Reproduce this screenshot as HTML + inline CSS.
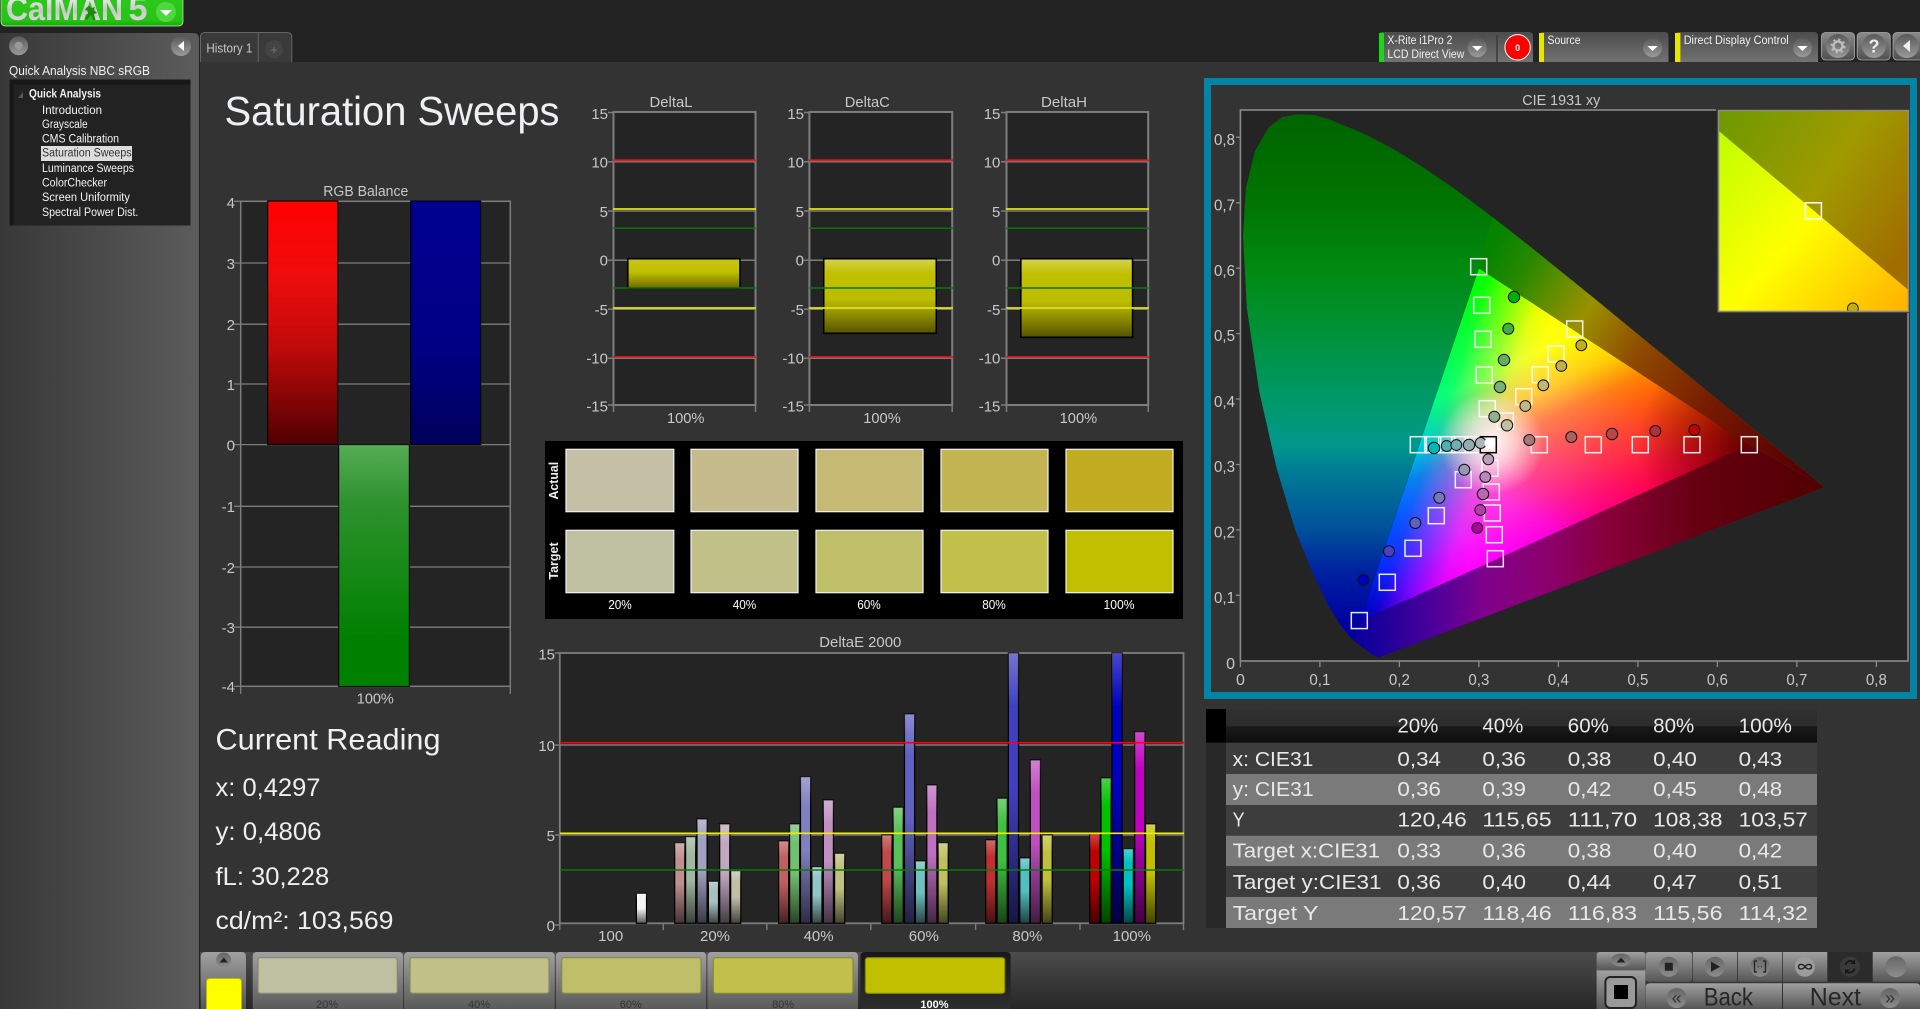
<!DOCTYPE html>
<html lang="en"><head><meta charset="utf-8"><title>CalMAN 5 - Saturation Sweeps</title>
<style>
html,body{margin:0;padding:0;background:#222;width:1920px;height:1009px;overflow:hidden}
svg{display:block}
text{font-family:"Liberation Sans",sans-serif;fill:#c8c8c8}
.w{fill:#f0f0f0}.k{fill:#262626}
.m{text-anchor:middle}.e{text-anchor:end}
.a{font-size:15px}
.c{font-size:16px}
.tb{font-size:20px;fill:#e8e8e8}
.tr{font-size:11.5px;fill:#f4f4f4}
.r{font-size:25px;fill:#eee}
</style></head><body>
<svg width="1920" height="1009" viewBox="0 0 1920 1009" xmlns="http://www.w3.org/2000/svg">
<defs>
<linearGradient id="lp" x1="0" x2="1" y1="0" y2="0"><stop offset="0" stop-color="#383838"/><stop offset="1" stop-color="#5c5c5c"/></linearGradient>
<linearGradient id="logo" x1="0" x2="0" y1="0" y2="1"><stop offset="0" stop-color="#2ec81c"/><stop offset=".8" stop-color="#24c414"/><stop offset="1" stop-color="#18a80c"/></linearGradient>
<linearGradient id="lt" x1="0" x2="0" y1="0" y2="1"><stop offset="0" stop-color="#fff"/><stop offset=".55" stop-color="#c8c8c8"/><stop offset="1" stop-color="#e0e0e0"/></linearGradient>
<linearGradient id="dd" x1="0" x2="0" y1="0" y2="1"><stop offset="0" stop-color="#4c4c4c"/><stop offset="1" stop-color="#727272"/></linearGradient>
<linearGradient id="btn" x1="0" x2="0" y1="0" y2="1"><stop offset="0" stop-color="#8a8a8a"/><stop offset="1" stop-color="#505050"/></linearGradient>
<linearGradient id="btn2" x1="0" x2="0" y1="0" y2="1"><stop offset="0" stop-color="#a0a0a0"/><stop offset="1" stop-color="#565656"/></linearGradient>
<linearGradient id="circ" x1="0" x2="0" y1="0" y2="1"><stop offset="0" stop-color="#5a5a5a"/><stop offset="1" stop-color="#9a9a9a"/></linearGradient>
<linearGradient id="circ2" x1="0" x2="0" y1="0" y2="1"><stop offset="0" stop-color="#666"/><stop offset="1" stop-color="#8c8c8c"/></linearGradient>
<linearGradient id="strip" x1="0" x2="0" y1="0" y2="1"><stop offset="0" stop-color="#4c4c4c"/><stop offset="1" stop-color="#262626"/></linearGradient>
<linearGradient id="act" x1="0" x2="0" y1="0" y2="1"><stop offset="0" stop-color="#181818"/><stop offset="1" stop-color="#2e2e2e"/></linearGradient>
<linearGradient id="hd" x1="0" x2="0" y1="0" y2="1"><stop offset="0" stop-color="#303030"/><stop offset=".5" stop-color="#2c2c2c"/><stop offset=".52" stop-color="#1a1a1a"/><stop offset="1" stop-color="#0c0c0c"/></linearGradient>
<linearGradient id="barr" x1="0" x2="0" y1="0" y2="1"><stop offset="0" stop-color="#f00"/><stop offset=".3" stop-color="#f00c0c"/><stop offset=".6" stop-color="#c00a0a"/><stop offset="1" stop-color="#500000"/></linearGradient>
<linearGradient id="barb" x1="0" x2="0" y1="0" y2="1"><stop offset="0" stop-color="#000090"/><stop offset=".6" stop-color="#000084"/><stop offset="1" stop-color="#00005a"/></linearGradient>
<linearGradient id="barg" x1="0" x2="0" y1="0" y2="1"><stop offset="0" stop-color="#56ac56"/><stop offset=".25" stop-color="#2c922c"/><stop offset=".8" stop-color="#008000"/><stop offset="1" stop-color="#008000"/></linearGradient>
<linearGradient id="y1" x1="0" x2="0" y1="0" y2="1"><stop offset="0" stop-color="#c8c618"/><stop offset=".45" stop-color="#c0c000"/><stop offset="1" stop-color="#6e6a00"/></linearGradient>
<linearGradient id="y2" x1="0" x2="0" y1="0" y2="1"><stop offset="0" stop-color="#d6d24e"/><stop offset=".2" stop-color="#c0c000"/><stop offset=".55" stop-color="#bcbc00"/><stop offset="1" stop-color="#565200"/></linearGradient>
<linearGradient id="ov" x1="0" x2="0" y1="0" y2="1"><stop offset="0" stop-color="#fff" stop-opacity=".28"/><stop offset=".2" stop-color="#fff" stop-opacity="0"/><stop offset=".5" stop-color="#000" stop-opacity="0"/><stop offset="1" stop-color="#000" stop-opacity=".65"/></linearGradient>
<clipPath id="loc"><path id="locus" d="M1378.8 657.5L1371.1 653.7 1364.9 649.2 1354.9 641.4 1348.1 634.7 1339.1 623 1327.5 604 1313 574 1295 529.5 1276.5 467.8 1259.1 390.7 1246.9 308.5 1243 235.7 1246 187.5 1255 151 1269 127 1282.6 117 1296.4 114.4 1314.8 115 1331.2 120.1 1363.4 133.4 1393.8 149.3 1422.9 167.2 1451.7 186.8 1480.2 207.8 1508.6 229.6 1537 252.1 1565.3 275 1593.5 297.8 1621 320.4 1647.8 342.4 1673.5 363.4 1697.7 383.2 1719.7 401.3 1738.9 417 1769.7 442.2 1790.2 459 1803.2 469.7 1812 477 1824.5 487.2Z"/></clipPath>
<clipPath id="tri"><polygon points="1749.2,444.8 1478.9,268.2 1359.65,621.5"/></clipPath>
<clipPath id="ins"><rect x="1719" y="111" width="189" height="200"/></clipPath>
<linearGradient id="ol" gradientUnits="userSpaceOnUse" x1="0" y1="115" x2="0" y2="660"><stop offset="0" stop-color="#006400"/><stop offset=".156" stop-color="#007400"/><stop offset=".28" stop-color="#008a10"/><stop offset=".4" stop-color="#009238"/><stop offset=".52" stop-color="#009868"/><stop offset=".605" stop-color="#00988c"/><stop offset=".65" stop-color="#007e94"/><stop offset=".76" stop-color="#00509a"/><stop offset=".84" stop-color="#0020a0"/><stop offset=".94" stop-color="#0000a0"/><stop offset="1" stop-color="#0000a0"/></linearGradient>
<linearGradient id="ow" gradientUnits="userSpaceOnUse" x1="1479" y1="268" x2="1824" y2="487"><stop offset="0" stop-color="#068400"/><stop offset=".1" stop-color="#2a8800"/><stop offset=".18" stop-color="#5e8e00"/><stop offset=".28" stop-color="#9a9000"/><stop offset=".44" stop-color="#8f4a00"/><stop offset=".66" stop-color="#761a00"/><stop offset=".85" stop-color="#600600"/><stop offset="1" stop-color="#500000"/></linearGradient>
<linearGradient id="ob" gradientUnits="userSpaceOnUse" x1="1340" y1="0" x2="1824" y2="0"><stop offset="0" stop-color="#0000a0"/><stop offset=".08" stop-color="#1a009a"/><stop offset=".2" stop-color="#50009a"/><stop offset=".3" stop-color="#80008c"/><stop offset=".42" stop-color="#8c0070"/><stop offset=".56" stop-color="#880038"/><stop offset=".75" stop-color="#640010"/><stop offset="1" stop-color="#500000"/></linearGradient>
<linearGradient id="chR" gradientUnits="userSpaceOnUse" x1="1426.2" y1="424.3" x2="1507.8" y2="451.9"><stop offset="0" stop-color="#000"/><stop offset=".154" stop-color="#140000"/><stop offset=".308" stop-color="#4d0000"/><stop offset=".46" stop-color="#800000"/><stop offset=".615" stop-color="#b30000"/><stop offset=".77" stop-color="#e60000"/><stop offset="1" stop-color="#f00"/></linearGradient>
<linearGradient id="chG" gradientUnits="userSpaceOnUse" x1="1533.1" y1="542.8" x2="1462.5" y2="387.1"><stop offset="0" stop-color="#000"/><stop offset=".125" stop-color="#001400"/><stop offset=".25" stop-color="#002e00"/><stop offset=".375" stop-color="#004700"/><stop offset=".5" stop-color="#006100"/><stop offset=".625" stop-color="#008000"/><stop offset=".79" stop-color="#00cc00"/><stop offset="1" stop-color="#0f0"/></linearGradient>
<linearGradient id="chB" gradientUnits="userSpaceOnUse" x1="1567.2" y1="325.9" x2="1437.4" y2="524.4"><stop offset="0" stop-color="#000"/><stop offset=".12" stop-color="#000014"/><stop offset=".24" stop-color="#000033"/><stop offset=".36" stop-color="#00004d"/><stop offset=".48" stop-color="#00006b"/><stop offset=".6" stop-color="#00008c"/><stop offset=".76" stop-color="#0000d9"/><stop offset="1" stop-color="#00f"/></linearGradient>
<radialGradient id="dR" gradientUnits="userSpaceOnUse" cx="1749.2" cy="444.8" r="112"><stop offset="0" stop-color="#000" stop-opacity=".62"/><stop offset=".5" stop-color="#000" stop-opacity=".3"/><stop offset="1" stop-color="#000" stop-opacity="0"/></radialGradient>
<radialGradient id="dB" gradientUnits="userSpaceOnUse" cx="1359.65" cy="621.5" r="60"><stop offset="0" stop-color="#000" stop-opacity=".3"/><stop offset="1" stop-color="#000" stop-opacity="0"/></radialGradient>
<radialGradient id="wG" gradientUnits="userSpaceOnUse" cx="1492" cy="443" r="52"><stop offset="0" stop-color="#fff" stop-opacity=".95"/><stop offset=".45" stop-color="#fff" stop-opacity=".6"/><stop offset="1" stop-color="#fff" stop-opacity="0"/></radialGradient>
<linearGradient id="i1" gradientUnits="userSpaceOnUse" x1="1719" y1="111" x2="1909" y2="240"><stop offset="0" stop-color="#6c9a00"/><stop offset=".55" stop-color="#a09a00"/><stop offset="1" stop-color="#a06e00"/></linearGradient>
<linearGradient id="i2" gradientUnits="userSpaceOnUse" x1="1719" y1="131" x2="1909" y2="300"><stop offset="0" stop-color="#bfff00"/><stop offset=".5" stop-color="#ffff00"/><stop offset="1" stop-color="#ffb400"/></linearGradient>
</defs>

<!-- page -->
<rect width="1920" height="1009" fill="#222"/>
<rect x="200" y="62" width="1720" height="890" fill="#333"/>

<!-- logo -->
<path d="M1 -2H183V21Q183 26 178 26H6Q1 26 1 21Z" fill="url(#logo)" stroke="#c8f0c0" stroke-width=".7"/>
<text x="6" y="20" font-size="33" font-weight="bold" style="fill:url(#lt)" textLength="117" lengthAdjust="spacingAndGlyphs">CalMAN</text>
<text x="128.5" y="20" font-size="33" font-weight="bold" style="fill:url(#lt)" textLength="19" lengthAdjust="spacingAndGlyphs">5</text>
<path d="M86 8l3-2 3 2 3-1-1 3 3 3-3 1 1 6-2 0-2-5-4 5-2-1 3-6-1-3-2 1z" fill="#1d8a12"/>
<circle cx="166" cy="12" r="10" fill="#4ed840"/>
<path d="M160 10h12l-6 6z" fill="#fff"/>

<!-- left panel -->
<path d="M0 33H193Q199 33 199 39V1009H0Z" fill="url(#lp)"/>
<circle cx="18.6" cy="45.7" r="9.5" fill="url(#circ)"/><circle cx="18.6" cy="45.7" r="4" fill="#999"/>
<circle cx="181" cy="46" r="10" fill="url(#circ)"/><path d="M184 41v10l-6-5z" fill="#fff"/>
<text x="9" y="75" font-size="13" class="w" textLength="141" lengthAdjust="spacingAndGlyphs">Quick Analysis NBC sRGB</text>
<rect x="9.5" y="79.5" width="181" height="146" fill="#222"/>
<rect x="9.5" y="79.5" width="181" height="5" fill="#181818"/>
<rect x="9.5" y="79.5" width="4" height="146" fill="#181818"/>
<path d="M23 92v6h-5z" fill="#555"/>
<text x="29" y="97.7" font-size="11.5" font-weight="bold" class="w" textLength="72" lengthAdjust="spacingAndGlyphs">Quick Analysis</text>
<rect x="41" y="146" width="91" height="15" fill="#ddd"/>
<text x="42" y="114" class="tr" textLength="60" lengthAdjust="spacingAndGlyphs">Introduction</text>
<text x="42" y="128" class="tr" textLength="45.7" lengthAdjust="spacingAndGlyphs">Grayscale</text>
<text x="42" y="142.7" class="tr" textLength="77" lengthAdjust="spacingAndGlyphs">CMS Calibration</text>
<text x="42" y="156.7" font-size="11.5" style="fill:#333" textLength="89.6" lengthAdjust="spacingAndGlyphs">Saturation Sweeps</text>
<text x="42" y="172" class="tr" textLength="92" lengthAdjust="spacingAndGlyphs">Luminance Sweeps</text>
<text x="42" y="186.7" class="tr" textLength="65" lengthAdjust="spacingAndGlyphs">ColorChecker</text>
<text x="42" y="201" class="tr" textLength="87.9" lengthAdjust="spacingAndGlyphs">Screen Uniformity</text>
<text x="42" y="216" class="tr" textLength="96.4" lengthAdjust="spacingAndGlyphs">Spectral Power Dist.</text>

<!-- tabs -->
<path d="M200.5 62V37Q200.5 32.5 205 32.5H287Q291.8 32.5 291.8 37V62" fill="#3a3a3a" stroke="#666"/>
<line x1="258.2" y1="33" x2="258.2" y2="62" stroke="#666"/>
<text x="206.4" y="52.3" font-size="13" textLength="46" lengthAdjust="spacingAndGlyphs">History 1</text>
<circle cx="274" cy="49.3" r="9" fill="#444"/><text x="274" y="54" font-size="12" class="m" style="fill:#777">+</text>

<!-- top right toolbar -->
<path d="M1379 62V35Q1379 32 1382 32H1529Q1533 32 1533 36V62Z" fill="url(#dd)"/>
<rect x="1379" y="33" width="5" height="29" fill="#18d818"/>
<text x="1387.4" y="44" font-size="11.5" class="w" textLength="65" lengthAdjust="spacingAndGlyphs">X-Rite i1Pro 2</text>
<text x="1387.4" y="58" font-size="11.5" class="w" textLength="77" lengthAdjust="spacingAndGlyphs">LCD Direct View</text>
<circle cx="1477.3" cy="47.7" r="9.5" fill="url(#circ)"/><path d="M1472 46h10.5l-5.2 5z" fill="#fff"/>
<line x1="1497" y1="35" x2="1497" y2="62" stroke="#3a3a3a" stroke-width="1.5"/>
<circle cx="1517.6" cy="47.3" r="12.7" fill="#f00" stroke="#fff" stroke-width="1"/>
<text x="1517.6" y="51" font-size="9" font-weight="bold" class="m" style="fill:#fff">0</text>

<path d="M1539 62V35Q1539 32 1542 32H1665Q1668.5 32 1668.5 36V62Z" fill="url(#dd)"/>
<rect x="1539" y="33" width="5" height="29" fill="#e6e600"/>
<text x="1547.5" y="44" font-size="11.5" class="w" textLength="33" lengthAdjust="spacingAndGlyphs">Source</text>
<circle cx="1652.6" cy="47.7" r="9.5" fill="url(#circ)"/><path d="M1647.3 46h10.5l-5.2 5z" fill="#fff"/>

<path d="M1675 62V35Q1675 32 1678 32H1814Q1818 32 1818 36V62Z" fill="url(#dd)"/>
<rect x="1675" y="33" width="5.4" height="29" fill="#e6e600"/>
<text x="1683.7" y="44" font-size="11.5" class="w" textLength="105" lengthAdjust="spacingAndGlyphs">Direct Display Control</text>
<circle cx="1802.5" cy="47.7" r="9.5" fill="url(#circ)"/><path d="M1797.2 46h10.5l-5.2 5z" fill="#fff"/>

<rect x="1821.5" y="32.5" width="33" height="27.5" rx="4" fill="url(#btn)" stroke="#aaa" stroke-width=".8"/>
<circle cx="1838" cy="46" r="12" fill="url(#circ)"/>
<circle cx="1838" cy="46" r="4.5" fill="none" stroke="#bdbdbd" stroke-width="2.4"/>
<circle cx="1838" cy="46" r="6.5" fill="none" stroke="#bdbdbd" stroke-width="2" stroke-dasharray="2.2 2.9"/>
<rect x="1857.2" y="32.5" width="33" height="27.5" rx="4" fill="url(#btn)" stroke="#aaa" stroke-width=".8"/>
<circle cx="1874" cy="46" r="12" fill="url(#circ)"/>
<text x="1874" y="52.5" font-size="18" font-weight="bold" class="m" style="fill:#eee">?</text>
<rect x="1893" y="32.5" width="33" height="27.5" rx="4" fill="url(#btn)" stroke="#aaa" stroke-width=".8"/>
<circle cx="1906.8" cy="46" r="12" fill="url(#circ)"/><path d="M1910 40v12l-7-6z" fill="#eee"/>

<!-- heading -->
<text x="224.5" y="125" font-size="41" style="fill:#eef0f2" textLength="335" lengthAdjust="spacingAndGlyphs">Saturation Sweeps</text>

<!-- RGB balance -->
<text x="365.8" y="196" font-size="15" class="m" textLength="85" lengthAdjust="spacingAndGlyphs">RGB Balance</text>
<rect x="240.7" y="201.3" width="269.6" height="485" fill="#242424" stroke="#7d7d7d" stroke-width="1.5"/>
<g stroke="#7d7d7d" stroke-width="1.3"><path d="M234 201.3H240M234 263H510M234 324.2H510M234 384H510M234 444.6H510M234 506.3H510M234 567H510M234 627.2H510M234 686.4H240M240.7 686V694M510.3 686V694"/></g>
<rect x="267.7" y="201" width="70" height="243.6" fill="url(#barr)" stroke="#000"/>
<rect x="410.7" y="201" width="70" height="243.6" fill="url(#barb)" stroke="#000"/>
<rect x="338.7" y="444.6" width="70.6" height="241.8" fill="url(#barg)" stroke="#000"/>
<text x="235" y="208" class="a e">4</text><text x="235" y="269" class="a e">3</text><text x="235" y="330" class="a e">2</text><text x="235" y="390" class="a e">1</text><text x="235" y="450.5" class="a e">0</text><text x="235" y="512" class="a e">-1</text><text x="235" y="573" class="a e">-2</text><text x="235" y="633" class="a e">-3</text><text x="235" y="692" class="a e">-4</text>
<text x="375.3" y="703.5" class="a m" textLength="37" lengthAdjust="spacingAndGlyphs">100%</text>

<!-- Current reading -->
<text x="215.5" y="749.6" font-size="30" class="w" textLength="225" lengthAdjust="spacingAndGlyphs">Current Reading</text>
<text x="215.5" y="796" class="r" textLength="105" lengthAdjust="spacingAndGlyphs">x: 0,4297</text>
<text x="215.5" y="840" class="r" textLength="106" lengthAdjust="spacingAndGlyphs">y: 0,4806</text>
<text x="215.5" y="885" class="r" textLength="113.7" lengthAdjust="spacingAndGlyphs">fL: 30,228</text>
<text x="215.5" y="929" class="r" textLength="178" lengthAdjust="spacingAndGlyphs">cd/m²: 103,569</text>

<!-- Delta charts -->
<text x="671" y="107" class="a m" textLength="43" lengthAdjust="spacingAndGlyphs">DeltaL</text>
<rect x="613.5" y="112" width="142" height="293" fill="#242424" stroke="#7d7d7d" stroke-width="2"/>
<path d="M608 112.5h5M608 161.7H755M608 211H755M608 260.3H755M608 309.3H755M608 358.3H755M608 405h5M613.5 405v7M755.5 405v7" stroke="#7d7d7d" stroke-width="1.5" fill="none"/>
<rect x="627.8" y="258.7" width="112.2" height="29.5" fill="url(#y1)" stroke="#000" stroke-width="1.6"/>

<text x="867.3" y="107" class="a m" textLength="45" lengthAdjust="spacingAndGlyphs">DeltaC</text>
<rect x="809.4" y="112" width="142.8" height="293" fill="#242424" stroke="#7d7d7d" stroke-width="2"/>
<path d="M804 112.5h5M804 161.7H952M804 211H952M804 260.3H952M804 309.3H952M804 358.3H952M804 405h5M809.4 405v7M952.2 405v7" stroke="#7d7d7d" stroke-width="1.5" fill="none"/>
<rect x="823.7" y="258.7" width="112.6" height="74.6" fill="url(#y2)" stroke="#000" stroke-width="1.6"/>

<text x="1064" y="107" class="a m" textLength="46" lengthAdjust="spacingAndGlyphs">DeltaH</text>
<rect x="1006.5" y="112" width="141.7" height="293" fill="#242424" stroke="#7d7d7d" stroke-width="2"/>
<path d="M1001 112.5h5M1001 161.7H1148M1001 211H1148M1001 260.3H1148M1001 309.3H1148M1001 358.3H1148M1001 405h5M1006.5 405v7M1148.2 405v7" stroke="#7d7d7d" stroke-width="1.5" fill="none"/>
<rect x="1020.8" y="258.7" width="111.8" height="78.6" fill="url(#y2)" stroke="#000" stroke-width="1.6"/>

<g fill="none" stroke-width="1.8">
<path d="M613 160.3H756M809 160.3H953M1006 160.3H1149M613 357H756M809 357H953M1006 357H1149" stroke="#e01c1c"/>
<path d="M613 209H756M809 209H953M1006 209H1149M613 308H756M809 308H953M1006 308H1149" stroke="#e4e40c"/>
<path d="M613 228.3H756M809 228.3H953M1006 228.3H1149M613 288H756M809 288H953M1006 288H1149" stroke="#0a760a" stroke-width="1.5"/>
</g>
<text x="608" y="118.8" class="a e">15</text><text x="608" y="167.5" class="a e">10</text><text x="608" y="216.8" class="a e">5</text><text x="608" y="265.5" class="a e">0</text><text x="608" y="314.8" class="a e">-5</text><text x="608" y="363.5" class="a e">-10</text><text x="608" y="411.6" class="a e">-15</text>
<text x="804" y="118.8" class="a e">15</text><text x="804" y="167.5" class="a e">10</text><text x="804" y="216.8" class="a e">5</text><text x="804" y="265.5" class="a e">0</text><text x="804" y="314.8" class="a e">-5</text><text x="804" y="363.5" class="a e">-10</text><text x="804" y="411.6" class="a e">-15</text>
<text x="1000.4" y="118.8" class="a e">15</text><text x="1000.4" y="167.5" class="a e">10</text><text x="1000.4" y="216.8" class="a e">5</text><text x="1000.4" y="265.5" class="a e">0</text><text x="1000.4" y="314.8" class="a e">-5</text><text x="1000.4" y="363.5" class="a e">-10</text><text x="1000.4" y="411.6" class="a e">-15</text>
<text x="685.7" y="423" class="a m" textLength="37.5" lengthAdjust="spacingAndGlyphs">100%</text>
<text x="882" y="423" class="a m" textLength="37.5" lengthAdjust="spacingAndGlyphs">100%</text>
<text x="1078.4" y="423" class="a m" textLength="37.5" lengthAdjust="spacingAndGlyphs">100%</text>

<!-- Swatches -->
<rect x="545" y="441" width="638" height="178" fill="#000"/>
<g stroke="#f2f2f2" stroke-width="1.2">
<rect x="566" y="449.3" width="107.8" height="62.4" fill="#c5bfa6"/><rect x="691" y="449.3" width="107" height="62.4" fill="#c5bb8d"/><rect x="816" y="449.3" width="107" height="62.4" fill="#c5b974"/><rect x="941" y="449.3" width="107" height="62.4" fill="#c4b553"/><rect x="1066" y="449.3" width="107" height="62.4" fill="#c2ad22"/>
<rect x="566" y="530.3" width="107.8" height="62.4" fill="#bfbfa2"/><rect x="691" y="530.3" width="107" height="62.4" fill="#c0c088"/><rect x="816" y="530.3" width="107" height="62.4" fill="#bfbf6a"/><rect x="941" y="530.3" width="107" height="62.4" fill="#c0c04a"/><rect x="1066" y="530.3" width="107" height="62.4" fill="#c0c000"/>
</g>
<text transform="translate(558 480.7) rotate(-90)" font-size="13" font-weight="bold" class="m" style="fill:#eee" textLength="37.7" lengthAdjust="spacingAndGlyphs">Actual</text>
<text transform="translate(558 561) rotate(-90)" font-size="13" font-weight="bold" class="m" style="fill:#eee" textLength="37.3" lengthAdjust="spacingAndGlyphs">Target</text>
<text x="620" y="609" font-size="13" class="m" style="fill:#fff" textLength="23.6" lengthAdjust="spacingAndGlyphs">20%</text>
<text x="744.5" y="609" font-size="13" class="m" style="fill:#fff" textLength="23.6" lengthAdjust="spacingAndGlyphs">40%</text>
<text x="869" y="609" font-size="13" class="m" style="fill:#fff" textLength="23.6" lengthAdjust="spacingAndGlyphs">60%</text>
<text x="994" y="609" font-size="13" class="m" style="fill:#fff" textLength="23.6" lengthAdjust="spacingAndGlyphs">80%</text>
<text x="1119" y="609" font-size="13" class="m" style="fill:#fff" textLength="31" lengthAdjust="spacingAndGlyphs">100%</text>

<!-- DeltaE 2000 -->
<text x="860.3" y="647" class="a m" textLength="82" lengthAdjust="spacingAndGlyphs">DeltaE 2000</text>
<rect x="559.8" y="653" width="623.7" height="270.3" fill="#242424" stroke="#7d7d7d" stroke-width="1.8"/>
<path d="M555 653h5M555 745H1183M555 835H1183M555 925h5M559.8 923v7M663.3 923v7M766.9 923v7M870.8 923v7M975.6 923v7M1080 923v7M1183.5 923v7" stroke="#7d7d7d" stroke-width="1.4" fill="none"/>
<g stroke="#000" stroke-width="1.2">
<rect x="636.4" y="893.3" width="10.1" height="30" fill="#f4f4f4"/>
<rect x="674.7" y="842.7" width="10.1" height="80.6" fill="#c09090"/><rect x="685.6" y="836.7" width="10.1" height="86.6" fill="#a0b8a0"/><rect x="697" y="819" width="10.1" height="104.3" fill="#a0a0c0"/><rect x="708.4" y="881.3" width="10.1" height="42" fill="#a8c0c0"/><rect x="719.7" y="824" width="10.1" height="99.3" fill="#c0a8c0"/><rect x="730.7" y="870.7" width="10.1" height="52.6" fill="#c0c0a8"/>
<rect x="778.6" y="841" width="10.1" height="82.3" fill="#c06060"/><rect x="789.6" y="824" width="10.1" height="99.3" fill="#70c070"/><rect x="800.5" y="776.7" width="10.1" height="146.6" fill="#8080c0"/><rect x="811.9" y="866.7" width="10.1" height="56.6" fill="#90c8c8"/><rect x="823.3" y="800" width="10.1" height="123.3" fill="#c090c0"/><rect x="834.6" y="853.3" width="10.1" height="70" fill="#c0c080"/>
<rect x="881.8" y="835" width="10.1" height="88.3" fill="#c04848"/><rect x="893.1" y="807.3" width="10.1" height="116" fill="#58c058"/><rect x="904.5" y="714" width="10.1" height="209.3" fill="#6060c0"/><rect x="915.4" y="861" width="10.1" height="62.3" fill="#70c0c0"/><rect x="926.8" y="785" width="10.1" height="138.3" fill="#c070c0"/><rect x="938.1" y="842.7" width="10.1" height="80.6" fill="#c0c060"/>
<rect x="985.7" y="840" width="10.1" height="83.3" fill="#c03030"/><rect x="997.1" y="798.3" width="10.1" height="125" fill="#40c040"/><rect x="1008.4" y="653" width="10.1" height="270.3" fill="#4040c0"/><rect x="1019.8" y="858" width="10.1" height="65.3" fill="#50c0c0"/><rect x="1030.3" y="760" width="10.1" height="163.3" fill="#c050c0"/><rect x="1042.1" y="835" width="10.1" height="88.3" fill="#c0c040"/>
<rect x="1089.7" y="833.3" width="10.1" height="90" fill="#c00000"/><rect x="1101" y="778" width="10.1" height="145.3" fill="#00c000"/><rect x="1112" y="653" width="10.1" height="270.3" fill="#0000c0"/><rect x="1123.3" y="848.7" width="10.1" height="74.6" fill="#00c0c0"/><rect x="1134.7" y="731.7" width="10.1" height="191.6" fill="#c000c0"/><rect x="1145.6" y="824" width="10.1" height="99.3" fill="#c0c000"/>
</g>
<g>
<rect x="636.4" y="893.3" width="10.1" height="30" fill="url(#ov)"/>
<rect x="674.7" y="842.7" width="10.1" height="80.6" fill="url(#ov)"/><rect x="685.6" y="836.7" width="10.1" height="86.6" fill="url(#ov)"/><rect x="697" y="819" width="10.1" height="104.3" fill="url(#ov)"/><rect x="708.4" y="881.3" width="10.1" height="42" fill="url(#ov)"/><rect x="719.7" y="824" width="10.1" height="99.3" fill="url(#ov)"/><rect x="730.7" y="870.7" width="10.1" height="52.6" fill="url(#ov)"/>
<rect x="778.6" y="841" width="10.1" height="82.3" fill="url(#ov)"/><rect x="789.6" y="824" width="10.1" height="99.3" fill="url(#ov)"/><rect x="800.5" y="776.7" width="10.1" height="146.6" fill="url(#ov)"/><rect x="811.9" y="866.7" width="10.1" height="56.6" fill="url(#ov)"/><rect x="823.3" y="800" width="10.1" height="123.3" fill="url(#ov)"/><rect x="834.6" y="853.3" width="10.1" height="70" fill="url(#ov)"/>
<rect x="881.8" y="835" width="10.1" height="88.3" fill="url(#ov)"/><rect x="893.1" y="807.3" width="10.1" height="116" fill="url(#ov)"/><rect x="904.5" y="714" width="10.1" height="209.3" fill="url(#ov)"/><rect x="915.4" y="861" width="10.1" height="62.3" fill="url(#ov)"/><rect x="926.8" y="785" width="10.1" height="138.3" fill="url(#ov)"/><rect x="938.1" y="842.7" width="10.1" height="80.6" fill="url(#ov)"/>
<rect x="985.7" y="840" width="10.1" height="83.3" fill="url(#ov)"/><rect x="997.1" y="798.3" width="10.1" height="125" fill="url(#ov)"/><rect x="1008.4" y="653" width="10.1" height="270.3" fill="url(#ov)"/><rect x="1019.8" y="858" width="10.1" height="65.3" fill="url(#ov)"/><rect x="1030.3" y="760" width="10.1" height="163.3" fill="url(#ov)"/><rect x="1042.1" y="835" width="10.1" height="88.3" fill="url(#ov)"/>
<rect x="1089.7" y="833.3" width="10.1" height="90" fill="url(#ov)"/><rect x="1101" y="778" width="10.1" height="145.3" fill="url(#ov)"/><rect x="1112" y="653" width="10.1" height="270.3" fill="url(#ov)"/><rect x="1123.3" y="848.7" width="10.1" height="74.6" fill="url(#ov)"/><rect x="1134.7" y="731.7" width="10.1" height="191.6" fill="url(#ov)"/><rect x="1145.6" y="824" width="10.1" height="99.3" fill="url(#ov)"/>
</g>
<path d="M560 742.7H1184" stroke="#f00" stroke-width="1.6"/>
<path d="M560 833.3H1184" stroke="#f0f000" stroke-width="1.6"/>
<path d="M560 870H1184" stroke="#0a7a0a" stroke-width="1.5"/>
<text x="555" y="659.5" class="a e">15</text><text x="555" y="751" class="a e">10</text><text x="555" y="841" class="a e">5</text><text x="555" y="931" class="a e">0</text>
<text x="610.7" y="941" class="a m">100</text><text x="715" y="941" class="a m">20%</text><text x="818.6" y="941" class="a m">40%</text><text x="923.8" y="941" class="a m">60%</text><text x="1027.4" y="941" class="a m">80%</text><text x="1131.8" y="941" class="a m">100%</text>

<!-- CIE panel -->
<rect x="1207.5" y="81.5" width="706" height="614" fill="#333" stroke="#0085a6" stroke-width="7"/>
<text x="1561.3" y="105" class="a m" textLength="78" lengthAdjust="spacingAndGlyphs">CIE 1931 xy</text>
<rect x="1240.4" y="110" width="667.6" height="551" fill="#242424" stroke="#8a8a8a" stroke-width="1.6"/>
<g clip-path="url(#loc)">
<rect x="1240" y="110" width="600" height="560" fill="url(#ol)"/>
<polygon points="1478.9,268.2 1749.2,444.8 1830,490 1830,400 1500,190 1494,212" fill="url(#ow)"/>
<polygon points="1359.65,621.5 1749.2,444.8 1830,490 1830,670 1345,670" fill="url(#ob)"/>
</g>
<g style="isolation:isolate">
<polygon points="1749.2,444.8 1478.9,268.2 1359.65,621.5" fill="#000"/>
<polygon points="1749.2,444.8 1478.9,268.2 1359.65,621.5" fill="url(#chR)" style="mix-blend-mode:screen"/>
<polygon points="1749.2,444.8 1478.9,268.2 1359.65,621.5" fill="url(#chG)" style="mix-blend-mode:screen"/>
<polygon points="1749.2,444.8 1478.9,268.2 1359.65,621.5" fill="url(#chB)" style="mix-blend-mode:screen"/>
</g>
<g clip-path="url(#tri)"><circle cx="1749.2" cy="444.8" r="112" fill="url(#dR)"/><circle cx="1359.65" cy="621.5" r="60" fill="url(#dB)"/><circle cx="1492" cy="443" r="52" fill="url(#wG)"/></g>
<!-- target squares -->
<g fill="none" stroke="#fff" stroke-width="1.5" stroke-opacity=".9">
<rect x="1351.3" y="612.6" width="16" height="16"/><rect x="1379.3" y="574.3" width="16" height="16"/><rect x="1405" y="540.3" width="16" height="16"/><rect x="1428.3" y="507.7" width="16" height="16"/><rect x="1455.3" y="471.7" width="16" height="16"/>
<rect x="1470.7" y="258.7" width="16" height="16"/><rect x="1473.7" y="297.3" width="16" height="16"/><rect x="1475" y="331.3" width="16" height="16"/><rect x="1476.3" y="367" width="16" height="16"/><rect x="1479.3" y="400.7" width="16" height="16"/>
<rect x="1566.7" y="321" width="16" height="16"/><rect x="1548" y="346" width="16" height="16"/><rect x="1532.3" y="366.7" width="16" height="16"/><rect x="1515.7" y="388.7" width="16" height="16"/><rect x="1497.3" y="413" width="16" height="16"/>
<rect x="1741.3" y="436.7" width="16" height="16"/><rect x="1684" y="436.7" width="16" height="16"/><rect x="1632.3" y="436.7" width="16" height="16"/><rect x="1585.3" y="436.7" width="16" height="16"/><rect x="1531.3" y="436.7" width="16" height="16"/>
<rect x="1410.3" y="436.7" width="16" height="16"/><rect x="1424.7" y="436.7" width="16" height="16"/><rect x="1438.7" y="436.7" width="16" height="16"/><rect x="1452" y="436.7" width="16" height="16"/><rect x="1465.3" y="436.7" width="16" height="16"/>
<rect x="1487.3" y="550.7" width="16" height="16"/><rect x="1486.3" y="526.7" width="16" height="16"/><rect x="1484.3" y="505" width="16" height="16"/><rect x="1483.3" y="484" width="16" height="16"/><rect x="1482" y="460.3" width="16" height="16"/>
</g>
<rect x="1480.3" y="436.7" width="16" height="16" fill="none" stroke="#000" stroke-width="1.5"/>
<!-- actual dots -->
<g stroke="#111" stroke-width="1">
<circle cx="1694.3" cy="430" r="5.5" fill="#c00000"/><circle cx="1655.3" cy="431" r="5.5" fill="#b03040"/><circle cx="1612" cy="434" r="5.7" fill="#b84848"/><circle cx="1571.3" cy="437" r="5.5" fill="#b06060"/><circle cx="1529.3" cy="440" r="5.5" fill="#a87878"/>
<circle cx="1514" cy="297" r="5.7" fill="#00b000"/><circle cx="1508.3" cy="328.7" r="5.5" fill="#40b040"/><circle cx="1504" cy="360" r="5.7" fill="#60b060"/><circle cx="1500" cy="387" r="5.7" fill="#78b078"/><circle cx="1494.3" cy="416.7" r="5.5" fill="#90b090"/>
<circle cx="1581.3" cy="345.3" r="5.4" fill="#c0b010"/><circle cx="1561.3" cy="366" r="5.4" fill="#c0b050"/><circle cx="1543.3" cy="385.3" r="5.4" fill="#c0b870"/><circle cx="1525.3" cy="406" r="5.4" fill="#c0b888"/><circle cx="1507" cy="425.3" r="5.7" fill="#c0c0a0"/>
<circle cx="1434" cy="448" r="5.7" fill="#00b8b8"/><circle cx="1446.7" cy="446" r="5.4" fill="#50b0b8"/><circle cx="1456.3" cy="445" r="5.4" fill="#70b0b0"/><circle cx="1469" cy="445" r="5.7" fill="#90b0b0"/><circle cx="1480.7" cy="443" r="5.5" fill="#a8b8b8"/>
<circle cx="1477.3" cy="528" r="5.4" fill="#b000a0"/><circle cx="1480.3" cy="510" r="5.4" fill="#b040a8"/><circle cx="1483" cy="494" r="5.7" fill="#b868b0"/><circle cx="1485.3" cy="477" r="5.4" fill="#b888b8"/><circle cx="1488.3" cy="459.3" r="5.4" fill="#b8a0b8"/>
<circle cx="1363.5" cy="580" r="5.5" fill="#0000c0"/><circle cx="1389" cy="551.3" r="5.5" fill="#4840c0"/><circle cx="1415.3" cy="523" r="5.5" fill="#6060c0"/><circle cx="1439.3" cy="497.7" r="5.5" fill="#7878b8"/><circle cx="1464.3" cy="469.7" r="5.5" fill="#9898b8"/>
</g>
<circle cx="1490" cy="443" r="5.5" fill="#fff"/>
<!-- inset -->
<rect x="1716" y="109" width="194" height="204" fill="#2a2a2a"/>
<g clip-path="url(#ins)">
<rect x="1719" y="111" width="189" height="200" fill="url(#i1)"/>
<polygon points="1719,131.2 1908.4,290 1908.4,311 1719,311" fill="url(#i2)"/>
<rect x="1805.4" y="202.8" width="16" height="16" fill="none" stroke="#fff" stroke-width="1.5"/>
<circle cx="1852.9" cy="308.4" r="5.4" fill="#c0b010" stroke="#222"/>
</g>
<rect x="1718.5" y="110.5" width="190" height="201" fill="none" stroke="#8a8a8a" stroke-width="1.6"/>
<path d="M1236 137.3h4M1236 202.8h4M1236 268.2h4M1236 333.6h4M1236 399h4M1236 464.5h4M1236 529.9h4M1236 595.3h4M1240.4 661v6M1319.9 661v6M1399.4 661v6M1478.9 661v6M1558.4 661v6M1637.9 661v6M1717.4 661v6M1796.9 661v6M1876.4 661v6" stroke="#8a8a8a" stroke-width="1.3"/>
<text x="1235" y="145" class="c e" textLength="21" lengthAdjust="spacingAndGlyphs">0,8</text><text x="1235" y="210.5" class="c e" textLength="21" lengthAdjust="spacingAndGlyphs">0,7</text><text x="1235" y="276" class="c e" textLength="21" lengthAdjust="spacingAndGlyphs">0,6</text><text x="1235" y="341" class="c e" textLength="21" lengthAdjust="spacingAndGlyphs">0,5</text><text x="1235" y="407" class="c e" textLength="21" lengthAdjust="spacingAndGlyphs">0,4</text><text x="1235" y="472" class="c e" textLength="21" lengthAdjust="spacingAndGlyphs">0,3</text><text x="1235" y="537.5" class="c e" textLength="21" lengthAdjust="spacingAndGlyphs">0,2</text><text x="1235" y="603" class="c e" textLength="21" lengthAdjust="spacingAndGlyphs">0,1</text><text x="1235" y="669" class="c e">0</text>
<text x="1240.4" y="685" class="c m">0</text><text x="1319.9" y="685" class="c m" textLength="21" lengthAdjust="spacingAndGlyphs">0,1</text><text x="1399.4" y="685" class="c m" textLength="21" lengthAdjust="spacingAndGlyphs">0,2</text><text x="1478.9" y="685" class="c m" textLength="21" lengthAdjust="spacingAndGlyphs">0,3</text><text x="1558.4" y="685" class="c m" textLength="21" lengthAdjust="spacingAndGlyphs">0,4</text><text x="1637.9" y="685" class="c m" textLength="21" lengthAdjust="spacingAndGlyphs">0,5</text><text x="1717.4" y="685" class="c m" textLength="21" lengthAdjust="spacingAndGlyphs">0,6</text><text x="1796.9" y="685" class="c m" textLength="21" lengthAdjust="spacingAndGlyphs">0,7</text><text x="1876.4" y="685" class="c m" textLength="21" lengthAdjust="spacingAndGlyphs">0,8</text>

<!-- table -->
<rect x="1206" y="709" width="20" height="33.7" fill="#000"/>
<rect x="1226" y="709" width="591" height="33.7" fill="url(#hd)"/>
<rect x="1206" y="742.7" width="20" height="185.3" fill="#282828"/>
<rect x="1226" y="742.7" width="591" height="31.3" fill="#3d3d3d"/>
<rect x="1226" y="774" width="591" height="31" fill="#7a7a7a"/>
<rect x="1226" y="805" width="591" height="30.7" fill="#3d3d3d"/>
<rect x="1226" y="835.7" width="591" height="30.3" fill="#7a7a7a"/>
<rect x="1226" y="866" width="591" height="31" fill="#3d3d3d"/>
<rect x="1226" y="897" width="591" height="31" fill="#7a7a7a"/>
<text x="1397.4" y="732.7" class="tb" textLength="41" lengthAdjust="spacingAndGlyphs">20%</text><text x="1482.4" y="732.7" class="tb" textLength="41" lengthAdjust="spacingAndGlyphs">40%</text><text x="1567.8" y="732.7" class="tb" textLength="41" lengthAdjust="spacingAndGlyphs">60%</text><text x="1653.2" y="732.7" class="tb" textLength="41" lengthAdjust="spacingAndGlyphs">80%</text><text x="1738.6" y="732.7" class="tb" textLength="53.3" lengthAdjust="spacingAndGlyphs">100%</text>
<text x="1232.6" y="766" class="tb" textLength="80.8" lengthAdjust="spacingAndGlyphs">x: CIE31</text><text x="1397.4" y="766" class="tb" textLength="43.6" lengthAdjust="spacingAndGlyphs">0,34</text><text x="1482.4" y="766" class="tb" textLength="43.6" lengthAdjust="spacingAndGlyphs">0,36</text><text x="1567.8" y="766" class="tb" textLength="43.6" lengthAdjust="spacingAndGlyphs">0,38</text><text x="1653.2" y="766" class="tb" textLength="43.6" lengthAdjust="spacingAndGlyphs">0,40</text><text x="1738.6" y="766" class="tb" textLength="43.6" lengthAdjust="spacingAndGlyphs">0,43</text>
<text x="1232.6" y="796" class="tb" textLength="81" lengthAdjust="spacingAndGlyphs">y: CIE31</text><text x="1397.4" y="796" class="tb" textLength="43.6" lengthAdjust="spacingAndGlyphs">0,36</text><text x="1482.4" y="796" class="tb" textLength="43.6" lengthAdjust="spacingAndGlyphs">0,39</text><text x="1567.8" y="796" class="tb" textLength="43.6" lengthAdjust="spacingAndGlyphs">0,42</text><text x="1653.2" y="796" class="tb" textLength="43.6" lengthAdjust="spacingAndGlyphs">0,45</text><text x="1738.6" y="796" class="tb" textLength="43.6" lengthAdjust="spacingAndGlyphs">0,48</text>
<text x="1232.6" y="826.7" class="tb" textLength="12" lengthAdjust="spacingAndGlyphs">Y</text><text x="1397.4" y="826.7" class="tb" textLength="69.3" lengthAdjust="spacingAndGlyphs">120,46</text><text x="1482.4" y="826.7" class="tb" textLength="69.3" lengthAdjust="spacingAndGlyphs">115,65</text><text x="1567.8" y="826.7" class="tb" textLength="69.3" lengthAdjust="spacingAndGlyphs">111,70</text><text x="1653.2" y="826.7" class="tb" textLength="69.3" lengthAdjust="spacingAndGlyphs">108,38</text><text x="1738.6" y="826.7" class="tb" textLength="69.3" lengthAdjust="spacingAndGlyphs">103,57</text>
<text x="1232.6" y="857.7" class="tb" textLength="147.4" lengthAdjust="spacingAndGlyphs">Target x:CIE31</text><text x="1397.4" y="857.7" class="tb" textLength="43.6" lengthAdjust="spacingAndGlyphs">0,33</text><text x="1482.4" y="857.7" class="tb" textLength="43.6" lengthAdjust="spacingAndGlyphs">0,36</text><text x="1567.8" y="857.7" class="tb" textLength="43.6" lengthAdjust="spacingAndGlyphs">0,38</text><text x="1653.2" y="857.7" class="tb" textLength="43.6" lengthAdjust="spacingAndGlyphs">0,40</text><text x="1738.6" y="857.7" class="tb" textLength="43.6" lengthAdjust="spacingAndGlyphs">0,42</text>
<text x="1232.6" y="889" class="tb" textLength="149" lengthAdjust="spacingAndGlyphs">Target y:CIE31</text><text x="1397.4" y="889" class="tb" textLength="43.6" lengthAdjust="spacingAndGlyphs">0,36</text><text x="1482.4" y="889" class="tb" textLength="43.6" lengthAdjust="spacingAndGlyphs">0,40</text><text x="1567.8" y="889" class="tb" textLength="43.6" lengthAdjust="spacingAndGlyphs">0,44</text><text x="1653.2" y="889" class="tb" textLength="43.6" lengthAdjust="spacingAndGlyphs">0,47</text><text x="1738.6" y="889" class="tb" textLength="43.6" lengthAdjust="spacingAndGlyphs">0,51</text>
<text x="1232.6" y="920" class="tb" textLength="85.9" lengthAdjust="spacingAndGlyphs">Target Y</text><text x="1397.4" y="920" class="tb" textLength="69.3" lengthAdjust="spacingAndGlyphs">120,57</text><text x="1482.4" y="920" class="tb" textLength="69.3" lengthAdjust="spacingAndGlyphs">118,46</text><text x="1567.8" y="920" class="tb" textLength="69.3" lengthAdjust="spacingAndGlyphs">116,83</text><text x="1653.2" y="920" class="tb" textLength="69.3" lengthAdjust="spacingAndGlyphs">115,56</text><text x="1738.6" y="920" class="tb" textLength="69.3" lengthAdjust="spacingAndGlyphs">114,32</text>

<!-- bottom strip -->
<rect x="200" y="952" width="1720" height="57" fill="url(#strip)"/>
<path d="M200.7 1009V957Q200.7 952 205 952H242Q246 952 246 957V1009Z" fill="url(#btn2)"/>
<circle cx="223.7" cy="960" r="7.5" fill="url(#circ2)"/><path d="M219.5 962.5h8.5l-4.2-5z" fill="#222"/>
<rect x="206.5" y="978.5" width="35" height="34" rx="3" fill="#ff0" stroke="#b8b800"/>
<rect x="252.7" y="952" width="150.5" height="60" rx="4" fill="url(#btn2)"/>
<rect x="404" y="952" width="150.8" height="60" rx="4" fill="url(#btn2)"/>
<rect x="555.8" y="952" width="150.5" height="60" rx="4" fill="url(#btn2)"/>
<rect x="707.4" y="952" width="150.6" height="60" rx="4" fill="url(#btn2)"/>
<rect x="860.6" y="952" width="150" height="60" rx="4" fill="url(#act)"/>
<g stroke-width="1.2">
<rect x="258" y="957.7" width="139.3" height="35.6" rx="2.5" fill="#bfbfa2" stroke="#888870"/>
<rect x="410" y="957.7" width="139" height="35.6" rx="2.5" fill="#c0c088" stroke="#88885c"/>
<rect x="561.7" y="957.7" width="139.3" height="35.6" rx="2.5" fill="#bfbf6a" stroke="#888848"/>
<rect x="713.3" y="957.7" width="139.7" height="35.6" rx="2.5" fill="#c0c04a" stroke="#888830"/>
<rect x="865.4" y="957.7" width="139.3" height="35.6" rx="2.5" fill="#c0c000" stroke="#8a8a00"/>
</g>
<text x="327" y="1008" font-size="11" class="m" style="fill:#333">20%</text>
<text x="479" y="1008" font-size="11" class="m" style="fill:#333">40%</text>
<text x="630.8" y="1008" font-size="11" class="m" style="fill:#333">60%</text>
<text x="783" y="1008" font-size="11" class="m" style="fill:#333">80%</text>
<text x="934.5" y="1008" font-size="11" font-weight="bold" class="m" style="fill:#fff">100%</text>

<!-- bottom right controls -->
<path d="M1596.7 1009V955Q1596.7 952 1600 952H1642Q1645.4 952 1645.4 955V1009Z" fill="#777"/>
<rect x="1596.7" y="952" width="48.7" height="18" rx="3" fill="url(#btn2)"/>
<rect x="1596.7" y="970.7" width="48.7" height="38.3" fill="url(#btn2)"/>
<ellipse cx="1621" cy="960" rx="10" ry="6.5" fill="url(#circ2)"/><path d="M1616.5 962.5h9l-4.5-5z" fill="#222"/>
<rect x="1605.4" y="977" width="30.6" height="31" rx="5" fill="#999" stroke="#222" stroke-width="2"/>
<rect x="1614" y="985" width="14" height="14" fill="#000"/>
<rect x="1645.8" y="952" width="46.4" height="29.7" rx="3" fill="url(#btn2)"/>
<rect x="1693" y="952" width="44" height="29.7" fill="url(#btn2)"/>
<rect x="1738" y="952" width="44" height="29.7" fill="url(#btn2)"/>
<rect x="1783" y="952" width="44" height="29.7" fill="url(#btn2)"/>
<rect x="1828" y="952" width="44" height="29.7" fill="#2b2b2b"/>
<rect x="1873" y="952" width="47" height="29.7" fill="url(#btn2)"/>
<circle cx="1668.8" cy="966.7" r="10" fill="url(#circ2)"/><rect x="1664.8" y="962.7" width="8" height="8" fill="#222"/>
<circle cx="1715" cy="966.7" r="10" fill="url(#circ2)"/><path d="M1711 961.5l9 5.2-9 5.2z" fill="#222"/>
<circle cx="1760" cy="966.7" r="10" fill="url(#circ2)"/><path d="M1757 961h-2.5v11h2.5M1763 961h2.5v11h-2.5" fill="none" stroke="#222" stroke-width="1.3"/><path d="M1757.8 966.7h.8M1761 966.7h.8" stroke="#222" stroke-width="1.5"/>
<circle cx="1805" cy="966.7" r="10" fill="#9c9c9c"/><path d="M1805 966.7c-2-3-6.5-3-6.5 0s4.5 3 6.5 0c2-3 6.5-3 6.5 0s-4.5 3-6.5 0z" fill="none" stroke="#222" stroke-width="1.4"/>
<circle cx="1850" cy="966.7" r="10" fill="#3a3a3a"/><path d="M1845.5 965a5 5 0 0 1 8-3M1854.5 968.5a5 5 0 0 1-8 3" fill="none" stroke="#181818" stroke-width="1.8"/><path d="M1855 959v5h-5zM1845 974.5v-5h5z" fill="#181818"/>
<circle cx="1896" cy="966.7" r="10.5" fill="url(#circ2)"/>
<path d="M1645.8 1009V987Q1645.8 983.3 1650 983.3H1782V1009Z" fill="url(#btn2)"/>
<path d="M1783 1009V983.3H1916Q1920 983.3 1920 987V1009Z" fill="url(#btn2)"/>
<circle cx="1676.6" cy="998" r="10" fill="url(#circ2)"/>
<text x="1676.6" y="1004" font-size="18" class="m" style="fill:#333">«</text>
<text x="1703.7" y="1005.7" font-size="25" class="k" textLength="49.3" lengthAdjust="spacingAndGlyphs">Back</text>
<text x="1809.7" y="1005.7" font-size="25" class="k" textLength="51.3" lengthAdjust="spacingAndGlyphs">Next</text>
<circle cx="1890" cy="998" r="10" fill="url(#circ2)"/>
<text x="1890" y="1004" font-size="18" class="m" style="fill:#333">»</text>
</svg>
</body></html>
